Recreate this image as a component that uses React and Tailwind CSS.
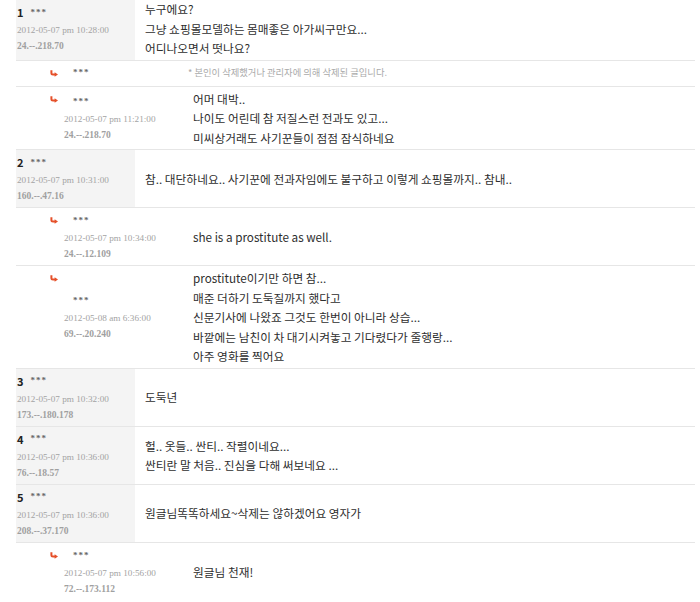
import React from 'react';

const kr = { fontFamily: '"Noto Sans CJK KR", "Noto Sans", sans-serif' };
const serif = { fontFamily: '"Liberation Serif", "DejaVu Serif", serif' };

const items = [
    { type: 'top', no: 1, date: '2012-05-07 pm 10:28:00', ip: '24.--.218.70', lines: ['누구에요?', '그냥 쇼핑몰모델하는 몸매좋은 아가씨구만요...', '어디나오면서 떳나요?'], first: true },
    { type: 'deleted' },
    { type: 'reply', date: '2012-05-07 pm 11:21:00', ip: '24.--.218.70', lines: ['어머 대박..', '나이도 어린데 참 저질스런 전과도 있고...', '미씨상거래도 사기꾼들이 점점 잠식하네요'] },
    { type: 'top', no: 2, date: '2012-05-07 pm 10:31:00', ip: '160.--.47.16', lines: ['참.. 대단하네요.. 사기꾼에 전과자임에도 불구하고 이렇게 쇼핑몰까지.. 참내..'] },
    { type: 'reply', date: '2012-05-07 pm 10:34:00', ip: '24.--.12.109', lines: ['she is a prostitute as well.'] },
    { type: 'reply', date: '2012-05-08 am 6:36:00', ip: '69.--.20.240', lines: ['prostitute이기만 하면 참...', '매준 더하기 도둑질까지 했다고', '신문기사에 나왔죠 그것도 한번이 아니라 상습...', '바깥에는 남친이 차 대기시켜놓고 기다렸다가 줄행랑...', '아주 영화를 찍어요'] },
    { type: 'top', no: 3, date: '2012-05-07 pm 10:32:00', ip: '173.--.180.178', lines: ['도둑년'] },
    { type: 'top', no: 4, date: '2012-05-07 pm 10:36:00', ip: '76.--.18.57', lines: ['헐.. 옷들.. 싼티.. 작렬이네요...', '싼티란 말 처음.. 진심을 다해 써보네요 ...'] },
    { type: 'top', no: 5, date: '2012-05-07 pm 10:36:00', ip: '208.--.37.170', lines: ['원글님똑똑하세요~삭제는 않하겠어요 영자가'] },
    { type: 'reply', date: '2012-05-07 pm 10:56:00', ip: '72.--.173.112', lines: ['원글님 천재!'], last: true },
];

const ReplyArrow = () => (
    <svg width="8" height="7" viewBox="0 0 8 7" className="block">
        <path d="M1.4 0.2 V3 Q1.4 4.5 3 4.5 H5.2" fill="none" stroke="#e5502a" strokeWidth="2" />
        <path d="M4.6 2.2 L8 4.5 L4.6 6.8 Z" fill="#e5502a" />
    </svg>
);

const Stars = () => (
    <span className="text-[9px] font-bold text-[#666] tracking-[1px]" style={serif}>***</span>
);

const Meta = ({ date, ip }) => (
    <>
        <div className="h-[16px] leading-[16px] text-[9.2px] text-[#a3a3a3] whitespace-nowrap" style={serif}>{date}</div>
        <div className="h-[16px] leading-[16px] text-[9.5px] font-bold text-[#a0a0a0] whitespace-nowrap" style={serif}>{ip}</div>
    </>
);

const Lines = ({ lines }) => (
    <div className="text-[11.7px] leading-[19.5px] text-[#2e2e2e]" style={kr}>
        {lines.map((l, i) => <div key={i} className="whitespace-nowrap">{l}</div>)}
    </div>
);

const TopRow = ({ item }) => (
    <div className={`flex min-h-[58px] border-b border-[#e6e6e6] ${item.first ? '-mt-[3px] min-h-[62px]' : ''}`}>
        <div className="w-[119px] shrink-0 bg-[#f4f4f4] flex flex-col justify-center pl-[1px]">
            <div className="h-[19px] flex items-center gap-[7px]">
                <span className="text-[11px] font-bold text-[#222]" style={kr}>{item.no}</span>
                <Stars />
            </div>
            <Meta date={item.date} ip={item.ip} />
        </div>
        <div className="flex items-center pl-[10px] py-[2px]">
            <Lines lines={item.lines} />
        </div>
    </div>
);

const ReplyRow = ({ item }) => (
    <div className={`flex min-h-[58px] py-[2px] ${item.last ? '' : 'border-b border-[#e6e6e6]'}`}>
        <div className="w-[48px] shrink-0 pl-[34px] pt-[7px]">
            <ReplyArrow />
        </div>
        <div className="w-[129px] shrink-0 flex flex-col justify-center">
            <div className="h-[19px] flex items-center pl-[9px]">
                <Stars />
            </div>
            <Meta date={item.date} ip={item.ip} />
        </div>
        <div className="flex items-center">
            <Lines lines={item.lines} />
        </div>
    </div>
);

const DeletedRow = () => (
    <div className="flex h-[26px] border-b border-[#e6e6e6]">
        <div className="w-[48px] shrink-0 pl-[34px] pt-[9px]">
            <ReplyArrow />
        </div>
        <div className="w-[124px] shrink-0 flex items-center pl-[9px]">
            <Stars />
        </div>
        <div className="flex items-center text-[9.3px] text-[#aaa] whitespace-nowrap" style={kr}>
            * 본인이 삭제했거나 관리자에 의해 삭제된 글입니다.
        </div>
    </div>
);

export default function App() {
    return (
        <div className="w-[700px] h-[602px] overflow-hidden bg-white">
            <div className="ml-[16px] w-[679px]">
                {items.map((item, i) => {
                    if (item.type === 'top') return <TopRow key={i} item={item} />;
                    if (item.type === 'deleted') return <DeletedRow key={i} />;
                    return <ReplyRow key={i} item={item} />;
                })}
            </div>
        </div>
    );
}
